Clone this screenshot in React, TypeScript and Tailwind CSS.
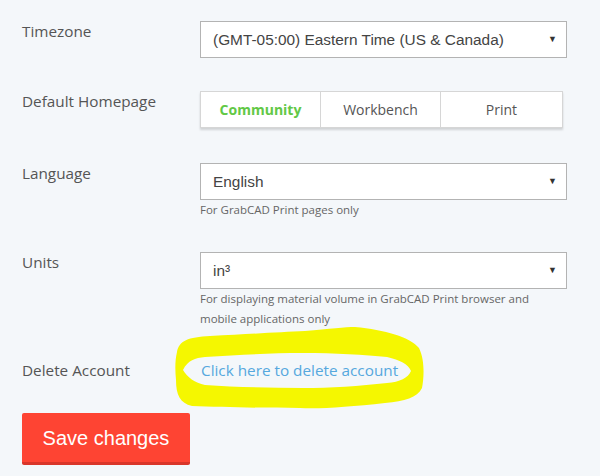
import React from "react";

const label = "w-[178px] shrink-0 text-[15.3px] leading-[20px] text-[#555] [font-family:'Open_Sans',sans-serif]";

function Select({ value }: { value: React.ReactNode }) {
  return (
    <div className="flex h-[37px] w-[367px] items-center justify-between border border-[#b3b3b3] bg-white pl-[12px] pr-[9px] text-[15.4px] text-[#444] [font-family:'Liberation_Sans',Arial,sans-serif]">
      <span>{value}</span>
      <span className="text-[9px] text-[#333]">▼</span>
    </div>
  );
}

const help = "text-[11.5px] leading-[20px] text-[#666] [font-family:'Open_Sans',sans-serif]";

export default function App() {
  return (
    <div className="relative h-[476px] w-[600px] overflow-hidden bg-[#f4f7fa] pl-[22px] pt-[21px]">
      <div className="flex">
        <div className={label}>Timezone</div>
        <Select value="(GMT-05:00) Eastern Time (US & Canada)" />
      </div>

      <div className="mt-[33px] flex">
        <div className={label}>Default Homepage</div>
        <div className="flex h-[37px] w-[363px] border border-[#d6d6d6] bg-white shadow-[0_2px_2px_rgba(0,0,0,0.15)] text-[14px] [font-family:'Open_Sans',sans-serif]">
          <div className="flex w-[120px] items-center justify-center border-r border-[#d6d6d6] font-bold text-[#62c846]">Community</div>
          <div className="flex w-[120px] items-center justify-center border-r border-[#d6d6d6] text-[#555]">Workbench</div>
          <div className="flex flex-1 items-center justify-center text-[#555]">Print</div>
        </div>
      </div>

      <div className="mt-[35px] flex">
        <div className={label}>Language</div>
        <div>
          <Select value="English" />
          <div className={help}>For GrabCAD Print pages only</div>
        </div>
      </div>

      <div className="mt-[32px] flex">
        <div className={label}>Units</div>
        <div className="w-[367px]">
          <Select value="in³" />
          <div className={help + " pr-[20px]"}>For displaying material volume in GrabCAD Print browser and mobile applications only</div>
        </div>
      </div>

      <div className="mt-[31px] flex">
        <div className={label}>Delete Account</div>
        <a className="pl-[1px] text-[15.3px] leading-[20px] text-[#56a8de] [font-family:'Open_Sans',sans-serif]">Click here to delete account</a>
      </div>

      <button className="mt-[33px] h-[52px] w-[168px] rounded-[2px] border-b-[3px] border-[#d9362a] bg-[#fe4433] text-[20px] text-white [font-family:'Liberation_Sans',Arial,sans-serif]">
        Save changes
      </button>

      <svg className="pointer-events-none absolute left-0 top-0" width="600" height="476" viewBox="0 0 600 476">
        <path
          fillRule="evenodd"
          fill="#f5f700"
          d="M177 352 C179 341 188 337 210 336 C250 334 280 332 305 331 C330 329 345 327 355 327 C385 330 410 337 419 348 C425 360 424 378 422 388 C417 398 405 401 385 403 C350 407 320 409 300 408 C260 408 220 407 192 406 C180 403 176 395 176 380 C175 370 175 360 177 352 Z
             M183 370 C188 360 195 358 205 357 C240 355 270 353 303 353 C335 353 365 355 387 357 C400 360 408 364 411 371 C408 378 400 382 387 383 C360 386 330 388 303 388 C270 388 235 387 205 385 C195 383 187 377 183 370 Z"
        />
      </svg>
    </div>
  );
}
